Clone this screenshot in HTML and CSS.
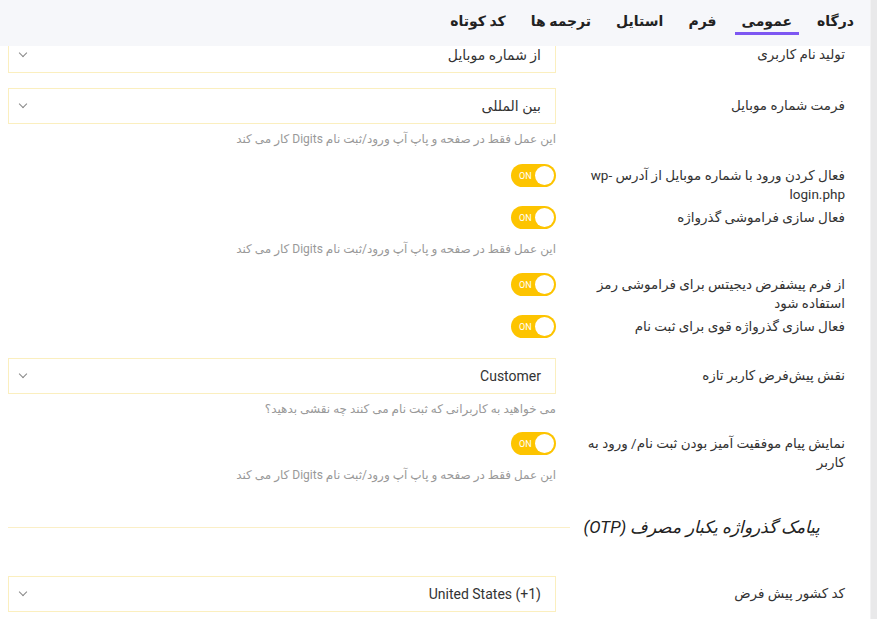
FILE: index.html
```html
<!DOCTYPE html>
<html lang="fa" dir="rtl">
<head>
<meta charset="utf-8">
<link rel="stylesheet" href="styles.css">
</head>
<body>
<div class="page">
  <div class="main">
    <nav class="topbar">
      <span class="tab">درگاه</span>
      <span class="tab active">عمومی</span>
      <span class="tab">فرم</span>
      <span class="tab">استایل</span>
      <span class="tab">ترجمه ها</span>
      <span class="tab">کد کوتاه</span>
    </nav>
    <div class="content">
      <div class="row gap-15">
        <div class="label label-select">تولید نام کاربری</div>
        <div class="control"><div class="select"><span>از شماره موبایل</span><i class="chev"></i></div></div>
      </div>
      <div class="row gap-16">
        <div class="label label-select">فرمت شماره موبایل</div>
        <div class="control"><div class="select"><span>بین المللی</span><i class="chev"></i></div><p class="note note-select">این عمل فقط در صفحه و پاپ آپ ورود/ثبت نام Digits کار می کند</p></div>
      </div>
      <div class="row gap-2">
        <div class="label">فعال کردن ورود با شماره موبایل از آدرس wp-login.php</div>
        <div class="control"><span class="toggle"><b>ON</b></span></div>
      </div>
      <div class="row gap-15">
        <div class="label">فعال سازی فراموشی گذرواژه</div>
        <div class="control"><span class="toggle"><b>ON</b></span><p class="note note-toggle">این عمل فقط در صفحه و پاپ آپ ورود/ثبت نام Digits کار می کند</p></div>
      </div>
      <div class="row gap-2">
        <div class="label">از فرم پیشفرض دیجیتس برای فراموشی رمز استفاده شود</div>
        <div class="control"><span class="toggle"><b>ON</b></span></div>
      </div>
      <div class="row gap-20">
        <div class="label">فعال سازی گذرواژه قوی برای ثبت نام</div>
        <div class="control"><span class="toggle"><b>ON</b></span></div>
      </div>
      <div class="row gap-14">
        <div class="label label-select">نقش پیش‌فرض کاربر تازه</div>
        <div class="control"><div class="select"><span class="latin">Customer</span><i class="chev"></i></div><p class="note note-select">می خواهید به کاربرانی که ثبت نام می کنند چه نقشی بدهید؟</p></div>
      </div>
      <div class="row gap-30">
        <div class="label">نمایش پیام موفقیت آمیز بودن ثبت نام/ ورود به کاربر</div>
        <div class="control"><span class="toggle"><b>ON</b></span><p class="note note-toggle">این عمل فقط در صفحه و پاپ آپ ورود/ثبت نام Digits کار می کند</p></div>
      </div>
      <div class="section">
        <h2 class="section-title">پیامک گذرواژه یکبار مصرف (OTP)</h2>
        <span class="section-line"></span>
      </div>
      <div class="row">
        <div class="label label-select">کد کشور پیش فرض</div>
        <div class="control"><div class="select"><span class="latin">United States (+1)</span><i class="chev"></i></div></div>
      </div>
    </div>
  </div>
  <div class="scrollbar"></div>
</div>
</body>
</html>
```
FILE: styles.css
```css
* { box-sizing: border-box; }
html, body { margin: 0; padding: 0; }
body {
  width: 877px;
  height: 619px;
  overflow: hidden;
  background: #fff;
  font-family: Roboto, "DejaVu Sans", sans-serif;
  color: #333;
}
.page {
  display: flex;
  direction: ltr;
  height: 619px;
}
.main {
  position: relative;
  direction: rtl;
  width: 870px;
  overflow: hidden;
}
.scrollbar {
  width: 7px;
  background: #e9e9ea;
  border-left: 1px solid #f2f2f3;
}
.topbar {
  position: absolute;
  top: 0;
  left: 0;
  right: 0;
  height: 46px;
  background: #f6f7fa;
  display: flex;
  align-items: flex-start;
  padding-right: 9px;
  gap: 11px;
  z-index: 2;
}
.tab {
  font-size: 14px;
  font-weight: 700;
  color: #222;
  padding: 11px 7px 0;
  height: 35px;
  line-height: 20px;
}
.tab.active {
  border-bottom: 3px solid #7d57f2;
}
.content {
  padding: 37px 25px 0 8px;
}
.row {
  display: grid;
  grid-template-columns: 258px 1fr;
  column-gap: 31px;
  align-items: start;
}
.gap-2 { margin-bottom: 2px; }
.gap-14 { margin-bottom: 14px; }
.gap-15 { margin-bottom: 15px; }
.gap-16 { margin-bottom: 16px; }
.gap-20 { margin-bottom: 20px; }
.gap-30 { margin-bottom: 30px; }
.label {
  font-size: 13.5px;
  line-height: 19px;
  padding-top: 2px;
  color: #333;
}
.label-select { padding-top: 8px; }
.control {
  display: flex;
  flex-direction: column;
  align-items: flex-start;
}
.select {
  width: 100%;
  height: 36px;
  border: 1px solid #fbefbf;
  display: flex;
  align-items: center;
  justify-content: space-between;
  padding: 0 14px 0 11px;
  font-size: 14px;
  color: #333;
}
.latin { font-family: Roboto, sans-serif; }
.chev {
  width: 6px;
  height: 6px;
  border-right: 1px solid #888;
  border-bottom: 1px solid #888;
  transform: rotate(45deg);
  margin-top: -4px;
}
.note {
  margin: 0;
  font-size: 12px;
  line-height: 18px;
  color: #999;
}
.note-select { margin-top: 6px; }
.note-toggle { margin-top: 11px; }
.toggle {
  width: 45px;
  height: 23px;
  border-radius: 12px;
  background: #fdc400;
  display: flex;
  direction: ltr;
  align-items: center;
  justify-content: space-between;
  padding: 0 2px 0 8px;
}
.toggle b {
  font-family: Roboto, sans-serif;
  font-size: 9px;
  font-weight: 400;
  color: #fff;
}
.toggle::after {
  content: "";
  width: 19px;
  height: 19px;
  border-radius: 50%;
  background: #fff;
}
.section {
  display: flex;
  align-items: center;
  gap: 14px;
  padding-right: 25px;
  margin-bottom: 36px;
}
.section-title {
  margin: 0;
  font-size: 17px;
  font-weight: 400;
  font-style: italic;
  line-height: 26px;
  color: #222;
  white-space: nowrap;
}
.section-line {
  flex: 1;
  height: 1px;
  background: #fbefc7;
}
```
